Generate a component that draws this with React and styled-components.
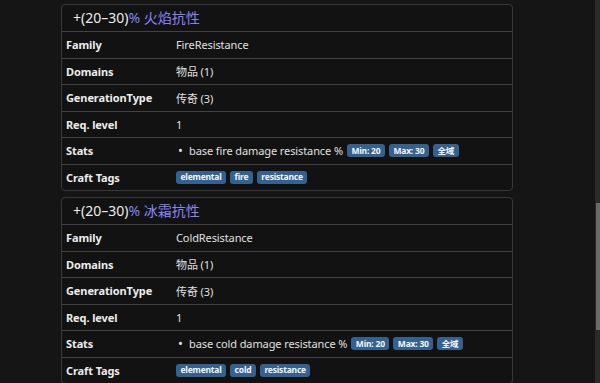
import React from 'react';
import styled, { createGlobalStyle } from 'styled-components';

const GlobalStyle = createGlobalStyle`
  html, body {
    margin: 0;
    padding: 0;
    background: #151515;
    overflow: hidden;
  }
  body {
    font-family: "Noto Sans", "Noto Sans CJK SC", sans-serif;
    color: #e4e4e4;
  }
`;

const Page = styled.div`
  height: 383px;
  box-sizing: border-box;
  padding: 4px 0 0 61px;
  display: flex;
  flex-direction: column;
  gap: 6px;
`;

const Card = styled.section`
  width: 452px;
  box-sizing: border-box;
  background: #121212;
  border: 1px solid #383838;
  border-radius: 4px;
  flex-shrink: 0;
`;

const Title = styled.h3`
  margin: 0;
  height: 26px;
  box-sizing: border-box;
  padding: 0 0 2px 11px;
  display: flex;
  align-items: center;
  font-size: 14px;
  font-weight: 400;
  color: #ececec;
`;

const Accent = styled.span`
  color: #8585f2;
  white-space: pre;
`;

const Row = styled.div`
  display: grid;
  grid-template-columns: 114px 1fr;
  align-items: center;
  height: 26.5px;
  box-sizing: border-box;
  border-top: 1px solid #424242;
  font-size: 11px;
`;

const Label = styled.div`
  font-weight: 700;
  padding-left: 4px;
  color: #ececec;
  letter-spacing: -0.1px;
`;

const Value = styled.div`
  display: flex;
  align-items: center;
  gap: 4px;
  color: #e0e0e0;
  letter-spacing: -0.1px;
`;

const Bullet = styled.span`
  width: 9px;
  text-align: center;
  font-size: 13px;
  line-height: 1;
`;

const Badge = styled.span`
  display: inline-flex;
  align-items: center;
  height: 13px;
  padding: 0 4.5px;
  border-radius: 3px;
  background: #34618e;
  color: #f4f6fa;
  font-size: 8.5px;
  font-weight: 700;
  line-height: 1;
  letter-spacing: -0.2px;
`;

const items = [
  {
    range: '+(20–30)',
    name: '% 火焰抗性',
    family: 'FireResistance',
    stat: 'base fire damage resistance %',
    tag: 'fire',
  },
  {
    range: '+(20–30)',
    name: '% 冰霜抗性',
    family: 'ColdResistance',
    stat: 'base cold damage resistance %',
    tag: 'cold',
  },
];

const ModCard = ({ mod }) => (
  <Card>
    <Title>
      {mod.range}
      <Accent>{mod.name}</Accent>
    </Title>
    <Row>
      <Label>Family</Label>
      <Value>{mod.family}</Value>
    </Row>
    <Row>
      <Label>Domains</Label>
      <Value>物品 (1)</Value>
    </Row>
    <Row>
      <Label>GenerationType</Label>
      <Value>传奇 (3)</Value>
    </Row>
    <Row>
      <Label>Req. level</Label>
      <Value>1</Value>
    </Row>
    <Row>
      <Label>Stats</Label>
      <Value>
        <Bullet>•</Bullet>
        <span>{mod.stat}</span>
        <Badge>Min: 20</Badge>
        <Badge>Max: 30</Badge>
        <Badge>全域</Badge>
      </Value>
    </Row>
    <Row>
      <Label>Craft Tags</Label>
      <Value>
        <Badge>elemental</Badge>
        <Badge>{mod.tag}</Badge>
        <Badge>resistance</Badge>
      </Value>
    </Row>
  </Card>
);

const Track = styled.div`
  position: fixed;
  top: 0;
  right: 0;
  width: 5px;
  height: 100%;
  background: #2a2a2a;
`;

const Thumb = styled.div`
  position: absolute;
  left: 1px;
  right: 0;
  top: 203px;
  height: 127px;
  background: #6a6a6a;
`;

export default function App() {
  return (
    <>
      <GlobalStyle />
      <Page>
        {items.map((mod) => (
          <ModCard key={mod.family} mod={mod} />
        ))}
      </Page>
      <Track>
        <Thumb />
      </Track>
    </>
  );
}
